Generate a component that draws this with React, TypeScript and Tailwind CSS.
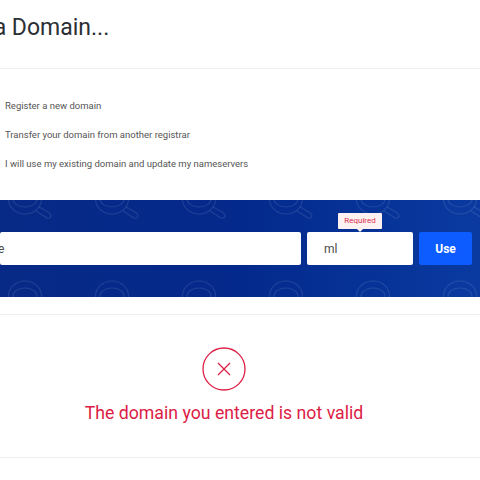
const OPTIONS = [
  'Register a new domain',
  'Transfer your domain from another registrar',
  'I will use my existing domain and update my nameservers',
]

function Pattern() {
  return (
    <svg className="absolute inset-0 h-full w-full" xmlns="http://www.w3.org/2000/svg">
      <defs>
        <pattern id="lens" x="0" y="-1" width="87" height="97" patternUnits="userSpaceOnUse">
          <g fill="none" stroke="#ffffff" strokeOpacity="0.1" strokeWidth="1.1">
            <ellipse cx="25" cy="97" rx="16.5" ry="15" />
            <ellipse cx="25" cy="97" rx="12" ry="8" />
            <ellipse cx="25" cy="0" rx="16.5" ry="15" />
            <ellipse cx="25" cy="0" rx="12" ry="8" />
            <path d="M36 12 L47 19 Q50 20 51 17 Q51 15 48 13 L39 8" />
          </g>
        </pattern>
      </defs>
      <rect width="100%" height="100%" fill="url(#lens)" />
    </svg>
  )
}

export default function App() {
  return (
    <div className="h-[480px] w-[480px] overflow-hidden bg-white font-['Roboto',sans-serif]">
      <div className="flex h-[69px] items-start border-b border-[#eeeeee]">
        <h1 className="ml-[-90px] mt-[13px] whitespace-nowrap text-[23px] leading-[30px] font-normal text-[#2b2f33]">
          Choose a Domain...
        </h1>
      </div>

      <div className="flex h-[131px] flex-col gap-[11px] pt-[28px] pl-[5px]">
        {OPTIONS.map(option => (
          <div key={option} className="h-[18px] whitespace-nowrap text-[9.5px] leading-[18px] text-[#555555]">
            {option}
          </div>
        ))}
      </div>

      <div className="relative flex h-[97px] items-center gap-[6px] overflow-hidden bg-gradient-to-r from-[#072a86] via-[#04298c] to-[#0a3aa0] pr-[8px]">
        <Pattern />
        <div className="relative flex h-[33px] w-[301px] items-center rounded-[2px] bg-white text-[12px] text-[#4a4a4a]">
          <span className="ml-[-2px]">e</span>
        </div>
        <div className="relative flex h-[33px] w-[106px] items-center rounded-[2px] bg-white pl-[17px] text-[12px] text-[#4a4a4a]">
          ml
          <div className="absolute left-[31px] top-[-19px] flex h-[16px] w-[44px] items-center justify-center rounded-[1px] bg-[#fdf1f2] text-[8px] text-[#d9304f]">
            Required
            <span className="absolute bottom-[-3px] left-1/2 ml-[-3px] h-0 w-0 border-x-[3px] border-t-[3px] border-x-transparent border-t-[#fdf1f2]" />
          </div>
        </div>
        <button className="relative h-[33px] w-[53px] rounded-[2px] bg-[#0d5cff] text-[12px] font-bold text-white">
          Use
        </button>
      </div>

      <div className="mt-[17px] flex h-[144px] flex-col items-center border-y border-[#eeeeee] pt-[32px] pr-[32px]">
        <svg width="44" height="44" viewBox="0 0 44 44" fill="none" stroke="#dc2045" strokeWidth="1.3">
          <circle cx="22" cy="22" r="21" />
          <path d="M16 16 L28 28 M28 16 L16 28" />
        </svg>
        <div className="mt-[10px] whitespace-nowrap text-[17.7px] leading-[24px] text-[#dc2045]">
          The domain you entered is not valid
        </div>
      </div>
    </div>
  )
}
